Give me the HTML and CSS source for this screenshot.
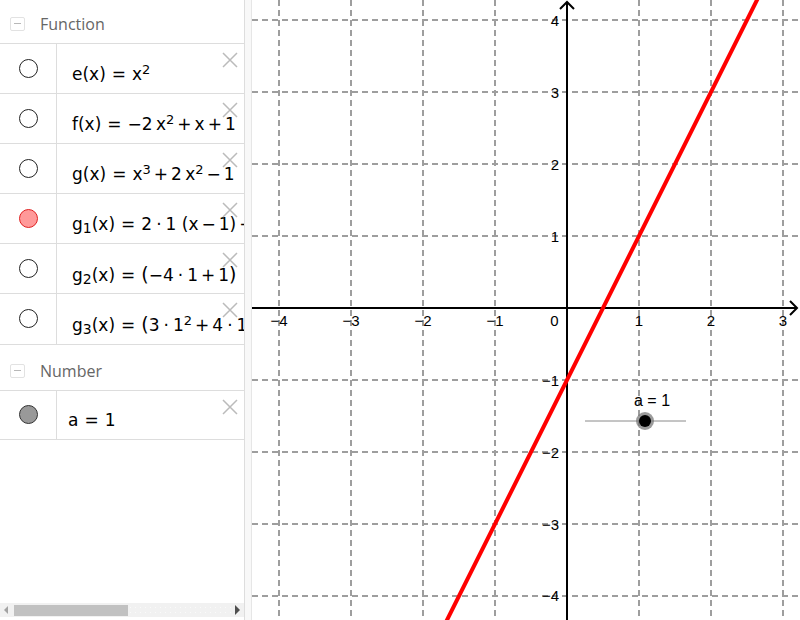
FILE: index.html
```html
<!DOCTYPE html>
<html>
<head>
<meta charset="utf-8">
<link rel="stylesheet" href="styles.css">
</head>
<body>
<div class="app">
  <div class="algebra">
    <div class="av-list">
      <div class="group-header"><span class="toggle"></span><span class="group-title">Function</span></div>

      <div class="row">
        <div class="marble-cell"><span class="marble"></span></div>
        <div class="formula">e(x)<span class="eq">=</span>x<sup>2</sup></div>
        <svg class="close" viewBox="0 0 16 16"><path d="M1 1L15 15M15 1L1 15"/></svg>
      </div>

      <div class="row">
        <div class="marble-cell"><span class="marble"></span></div>
        <div class="formula">f(x)<span class="eq">=</span>−2&thinsp;x<sup>2</sup><span class="op">+</span>x<span class="op">+</span>1</div>
        <svg class="close" viewBox="0 0 16 16"><path d="M1 1L15 15M15 1L1 15"/></svg>
      </div>

      <div class="row">
        <div class="marble-cell"><span class="marble"></span></div>
        <div class="formula">g(x)<span class="eq">=</span>x<sup>3</sup><span class="op">+</span>2&thinsp;x<sup>2</sup><span class="op">−</span>1</div>
        <svg class="close" viewBox="0 0 16 16"><path d="M1 1L15 15M15 1L1 15"/></svg>
      </div>

      <div class="row">
        <div class="marble-cell"><span class="marble marble-red"></span></div>
        <div class="formula">g<sub>1</sub>(x)<span class="eq">=</span>2<span class="dot">·</span>1&nbsp;(x<span class="op">−</span>1)<span class="op">+</span>1</div>
        <svg class="close" viewBox="0 0 16 16"><path d="M1 1L15 15M15 1L1 15"/></svg>
      </div>

      <div class="row">
        <div class="marble-cell"><span class="marble"></span></div>
        <div class="formula">g<sub>2</sub>(x)<span class="eq">=</span><span class="bp">(</span>−4<span class="dot">·</span>1<span class="op">+</span>1<span class="bp">)</span><span class="gap">x</span></div>
        <svg class="close" viewBox="0 0 16 16"><path d="M1 1L15 15M15 1L1 15"/></svg>
      </div>

      <div class="row row-last">
        <div class="marble-cell"><span class="marble"></span></div>
        <div class="formula">g<sub>3</sub>(x)<span class="eq">=</span><span class="bp">(</span>3<span class="dot">·</span>1<sup>2</sup><span class="op">+</span>4<span class="dot">·</span>1<span class="bp">)</span></div>
        <svg class="close" viewBox="0 0 16 16"><path d="M1 1L15 15M15 1L1 15"/></svg>
      </div>

      <div class="group-header group-header-2"><span class="toggle"></span><span class="group-title">Number</span></div>

      <div class="row row-num">
        <div class="marble-cell"><span class="marble marble-gray"></span></div>
        <div class="formula formula-num">a<span class="eq">=</span>1</div>
        <svg class="close" viewBox="0 0 16 16"><path d="M1 1L15 15M15 1L1 15"/></svg>
      </div>
    </div>

    <div class="hscroll">
      <span class="arrow-left"></span>
      <span class="thumb"></span>
      <span class="track"></span>
      <span class="arrow-right"></span>
    </div>
  </div>

  <div class="splitter"></div>

  <div class="graphics">
    <svg class="plot" width="548" height="620" viewBox="252 0 548 620">
      <g class="grid">
        <line x1="279" y1="0" x2="279" y2="620"/>
        <line x1="351" y1="0" x2="351" y2="620"/>
        <line x1="423" y1="0" x2="423" y2="620"/>
        <line x1="495" y1="0" x2="495" y2="620"/>
        <line x1="639" y1="0" x2="639" y2="620"/>
        <line x1="711" y1="0" x2="711" y2="620"/>
        <line x1="783" y1="0" x2="783" y2="620"/>
        <line x1="252" y1="20" x2="800" y2="20"/>
        <line x1="252" y1="92" x2="800" y2="92"/>
        <line x1="252" y1="164" x2="800" y2="164"/>
        <line x1="252" y1="236" x2="800" y2="236"/>
        <line x1="252" y1="380" x2="800" y2="380"/>
        <line x1="252" y1="452" x2="800" y2="452"/>
        <line x1="252" y1="524" x2="800" y2="524"/>
        <line x1="252" y1="596" x2="800" y2="596"/>
      </g>
      <g class="axes">
        <line x1="252" y1="308" x2="797" y2="308"/>
        <path d="M790 301L797 308L790 315"/>
        <line x1="567" y1="620" x2="567" y2="2"/>
        <path d="M560 9L567 2L574 9"/>
      </g>
      <g class="ticks">
        <text x="279" y="326" class="mid">−4</text>
        <text x="351" y="326" class="mid">−3</text>
        <text x="423" y="326" class="mid">−2</text>
        <text x="495" y="326" class="mid">−1</text>
        <text x="554.5" y="326" class="mid">0</text>
        <text x="639" y="326" class="mid">1</text>
        <text x="711" y="326" class="mid">2</text>
        <text x="783" y="326" class="mid">3</text>
        <text x="559" y="26" class="end">4</text>
        <text x="559" y="98" class="end">3</text>
        <text x="559" y="170" class="end">2</text>
        <text x="559" y="242" class="end">1</text>
        <text x="559" y="386" class="end">−1</text>
        <text x="559" y="458" class="end">−2</text>
        <text x="559" y="530" class="end">−3</text>
        <text x="559" y="601" class="end">−4</text>
      </g>
      <line class="fn" x1="444.5" y1="625" x2="759.5" y2="-5"/>
      <g class="slider">
        <line class="slider-line" x1="585" y1="421" x2="686" y2="421"/>
        <circle class="slider-halo" cx="645" cy="421" r="9"/>
        <circle class="slider-knob" cx="645" cy="421" r="6"/>
        <text class="slider-label" x="634" y="406">a = 1</text>
      </g>
    </svg>
  </div>
</div>
</body>
</html>
```

FILE: styles.css
```css
html, body {
  margin: 0;
  padding: 0;
  background: #ffffff;
}

.app {
  display: flex;
  width: 800px;
  height: 620px;
  overflow: hidden;
}

.algebra {
  width: 244px;
  height: 620px;
  display: flex;
  flex-direction: column;
  overflow: hidden;
  background: #ffffff;
}

.av-list {
  flex: 1;
  overflow: hidden;
}

.group-header {
  height: 44px;
  box-sizing: border-box;
  padding: 4px 0 0 10px;
  display: flex;
  align-items: center;
  border-bottom: 1px solid #dddddd;
  font-family: "Open Sans", "Noto Sans", sans-serif;
  font-size: 16px;
  color: #666666;
}

.group-header-2 {
  height: 46px;
  padding-top: 6px;
}

.toggle {
  width: 15px;
  height: 14px;
  box-sizing: border-box;
  border: 1px solid #e2e2e2;
  border-radius: 2px;
  margin-right: 15px;
  display: flex;
  align-items: center;
  justify-content: center;
}

.toggle::before {
  content: "";
  width: 7px;
  height: 1px;
  background: #b8b8b8;
}

.row {
  position: relative;
  display: flex;
  height: 50px;
  box-sizing: border-box;
  border-bottom: 1px solid #dddddd;
}

.row-last {
  height: 51px;
}

.row-num {
  height: 49px;
}

.marble-cell {
  width: 57px;
  flex: none;
  box-sizing: border-box;
  border-right: 1px solid #dddddd;
  display: flex;
  align-items: center;
  justify-content: center;
  padding-bottom: 1px;
}

.marble {
  width: 19px;
  height: 19px;
  box-sizing: border-box;
  border: 1px solid #222222;
  border-radius: 50%;
  background: #ffffff;
}

.marble-red {
  background: #ff9999;
  border-color: #e02020;
}

.marble-gray {
  background: #999999;
  border-color: #333333;
}

.formula {
  padding: 20px 0 0 15px;
  font-family: "DejaVu Sans", sans-serif;
  font-size: 17px;
  line-height: 20px;
  color: #000000;
  white-space: nowrap;
}

.formula-num {
  padding-left: 11px;
  padding-top: 19px;
}

.eq {
  margin: 0 6px;
}

.op {
  margin: 0 3px;
}

.dot {
  margin: 0 4px;
}

.gap {
  margin-left: 12px;
}

.bp {
  font-size: 19px;
}

sup {
  font-size: 13px;
  line-height: 0;
  vertical-align: 6px;
}

sub {
  font-size: 14px;
  line-height: 0;
  vertical-align: -3px;
}

.close {
  position: absolute;
  right: 6px;
  top: 8px;
  width: 16px;
  height: 16px;
  fill: none;
  stroke: #bbbbbb;
  stroke-width: 1.5;
}

.hscroll {
  height: 14px;
  margin-bottom: 3px;
  background: #f1f1f1;
  display: flex;
  align-items: center;
}

.arrow-left {
  width: 0;
  height: 0;
  margin: 0 6px 0 4px;
  border-top: 4px solid transparent;
  border-bottom: 4px solid transparent;
  border-right: 4px solid #a3a3a3;
}

.thumb {
  width: 114px;
  height: 11px;
  background: #c1c1c1;
}

.track {
  flex: 1;
  height: 11px;
  background-color: #f1f1f1;
  background-image: radial-gradient(circle, #fafafa 0.7px, transparent 1px);
  background-size: 5px 5px;
}

.arrow-right {
  width: 0;
  height: 0;
  margin: 0 4px 0 2px;
  border-top: 5px solid transparent;
  border-bottom: 5px solid transparent;
  border-left: 5px solid #505050;
}

.splitter {
  width: 8px;
  flex: none;
  box-sizing: border-box;
  border-left: 1px solid #dddddd;
  border-right: 1px solid #e6e6e6;
  background: #f8f8f8;
}

.graphics {
  flex: 1;
  background: #ffffff;
}

.plot {
  display: block;
}

.grid line {
  stroke: #9e9e9e;
  stroke-width: 2;
  stroke-dasharray: 6 4;
}

.axes line,
.axes path {
  stroke: #000000;
  stroke-width: 2;
  fill: none;
}

.ticks text {
  font-family: "Liberation Sans", Arial, sans-serif;
  font-size: 15px;
  fill: #000000;
}

.ticks .mid {
  text-anchor: middle;
}

.ticks .end {
  text-anchor: end;
}

.fn {
  stroke: #ff0000;
  stroke-width: 4;
}

.slider-line {
  stroke: #8a8a8a;
  stroke-width: 1;
}

.slider-halo {
  fill: #7a7a7a;
  fill-opacity: 0.75;
}

.slider-knob {
  fill: #000000;
}

.slider-label {
  font-family: "Liberation Sans", Arial, sans-serif;
  font-size: 16px;
  fill: #000000;
}
```
